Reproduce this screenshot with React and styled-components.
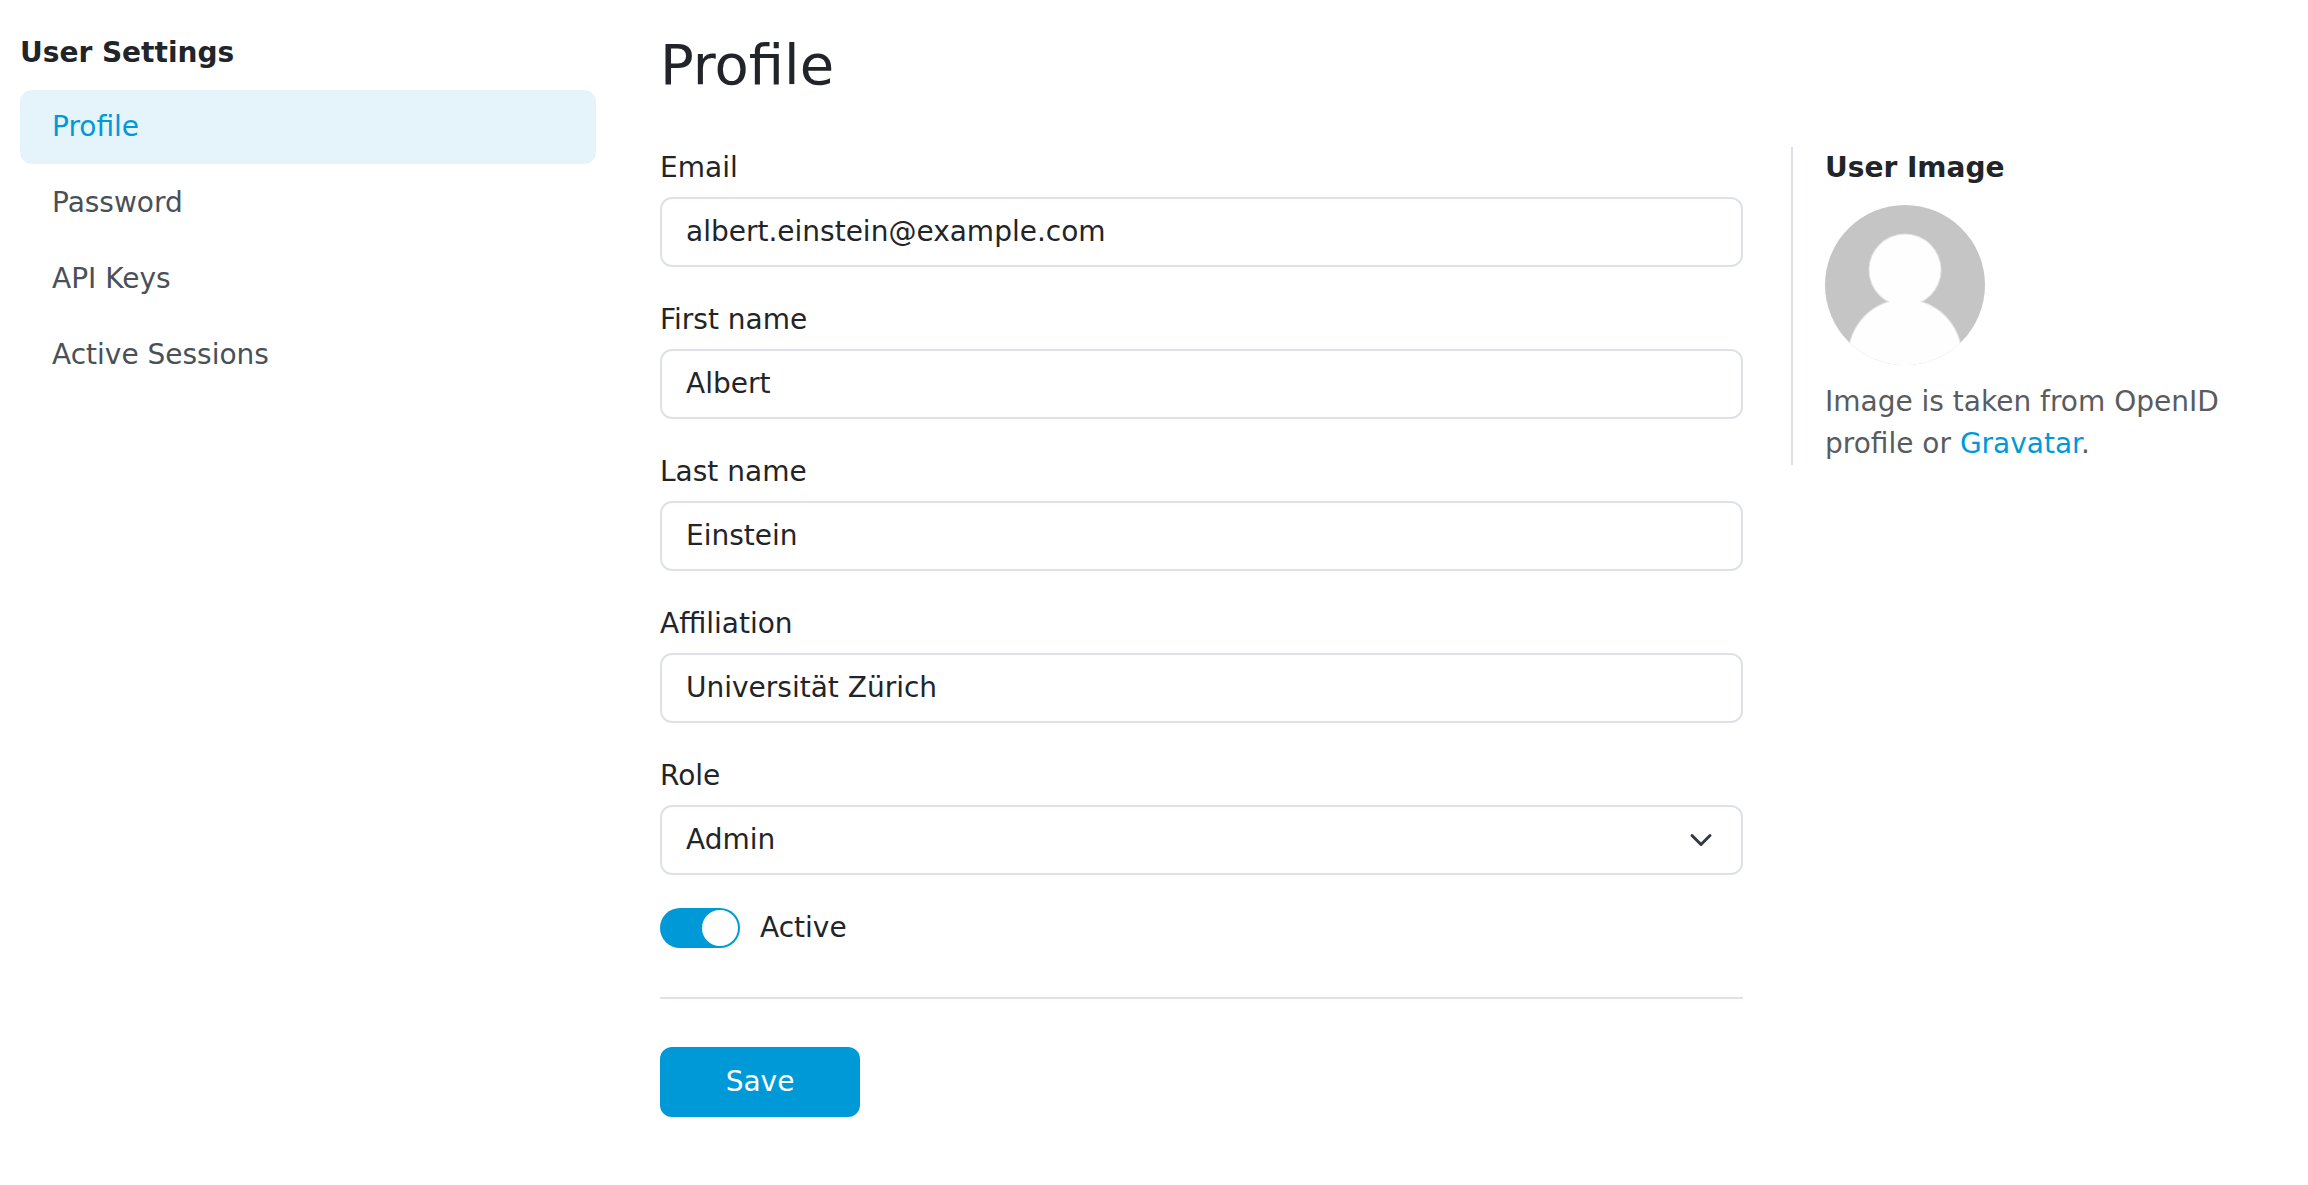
import React from "react";
import styled, { createGlobalStyle } from "styled-components";

const GlobalStyle = createGlobalStyle`
  *, *::before, *::after { box-sizing: border-box; }
  body {
    margin: 0;
    background: #fff;
    color: #212529;
    font-family: "DejaVu Sans", sans-serif;
    font-size: 28px;
    line-height: 42px;
  }
`;

const Page = styled.div`
  display: grid;
  grid-template-columns: 576px 1fr;
  column-gap: 64px;
  padding: 32px 20px;
`;

const SectionTitle = styled.h2`
  margin: 0 0 16px;
  font-size: 28px;
  line-height: 42px;
  font-weight: 700;
`;

const Nav = styled.nav`
  display: flex;
  flex-direction: column;
  gap: 2px;
`;

const NavItem = styled.a`
  padding: 16px 32px;
  border-radius: 12px;
  text-decoration: none;
  color: ${(p) => (p.$active ? "#0099d8" : "#495057")};
  background: ${(p) => (p.$active ? "#e5f4fb" : "transparent")};
`;

const PageTitle = styled.h1`
  margin: 0 0 50px;
  font-size: 56px;
  line-height: 65px;
  font-weight: 400;
`;

const Columns = styled.div`
  display: flex;
  align-items: flex-start;
  gap: 48px;
`;

const Form = styled.form`
  width: 1083px;
  display: flex;
  flex-direction: column;
`;

const Field = styled.div`
  display: flex;
  flex-direction: column;
  gap: 8px;
  margin-bottom: 32px;
`;

const Input = styled.input`
  height: 70px;
  margin: 0;
  padding: 11px 24px 13px;
  border: 2px solid #dee2e6;
  border-radius: 12px;
  outline: 0;
  background: #fff;
  color: inherit;
  font: inherit;
`;

const SelectBox = styled.div`
  display: flex;
  align-items: center;
  justify-content: space-between;
  height: 70px;
  padding: 12px 28px 12px 24px;
  border: 2px solid #dee2e6;
  border-radius: 12px;
`;

const SwitchRow = styled.div`
  display: flex;
  align-items: center;
  gap: 20px;
`;

const Switch = styled.span`
  display: flex;
  justify-content: flex-end;
  width: 80px;
  height: 40px;
  padding: 2px;
  border-radius: 20px;
  background: #0099d8;
`;

const Knob = styled.span`
  width: 36px;
  height: 36px;
  border-radius: 50%;
  background: #fff;
`;

const Divider = styled.hr`
  width: 100%;
  margin: 48px 0;
  border: 0;
  border-top: 2px solid #dee2e6;
`;

const SaveButton = styled.button`
  align-self: flex-start;
  width: 200px;
  height: 70px;
  padding: 0;
  border: 0;
  border-radius: 12px;
  background: #0099d8;
  color: #fff;
  font: inherit;
`;

const ImagePanel = styled.aside`
  flex: 1;
  padding-left: 32px;
  border-left: 2px solid #dee2e6;
`;

const Avatar = styled.svg`
  display: block;
  width: 160px;
  height: 160px;
  margin-bottom: 16px;
  border-radius: 50%;
`;

const Hint = styled.p`
  margin: 0;
  width: 410px;
  color: #595c5f;
`;

const Link = styled.a`
  color: #0099d8;
  text-decoration: none;
`;

const navItems = ["Profile", "Password", "API Keys", "Active Sessions"];

const fields = [
  { id: "email", label: "Email", value: "albert.einstein@example.com" },
  { id: "first", label: "First name", value: "Albert" },
  { id: "last", label: "Last name", value: "Einstein" },
  { id: "affiliation", label: "Affiliation", value: "Universität Zürich" },
];

export default function App() {
  return (
    <>
      <GlobalStyle />
      <Page>
        <div>
          <SectionTitle>User Settings</SectionTitle>
          <Nav>
            {navItems.map((name, i) => (
              <NavItem key={name} href="#" $active={i === 0}>{name}</NavItem>
            ))}
          </Nav>
        </div>
        <main>
          <PageTitle>Profile</PageTitle>
          <Columns>
            <Form>
              {fields.map((f) => (
                <Field key={f.id}>
                  <label htmlFor={f.id}>{f.label}</label>
                  <Input id={f.id} defaultValue={f.value} spellCheck={false} />
                </Field>
              ))}
              <Field>
                <label>Role</label>
                <SelectBox>
                  <span>Admin</span>
                  <svg width="24" height="24" viewBox="0 0 16 16" fill="none" stroke="#343a40" strokeWidth="2" strokeLinecap="round" strokeLinejoin="round">
                    <path d="m2 5 6 6 6-6" />
                  </svg>
                </SelectBox>
              </Field>
              <SwitchRow>
                <Switch><Knob /></Switch>
                <span>Active</span>
              </SwitchRow>
              <Divider />
              <SaveButton type="button">Save</SaveButton>
            </Form>
            <ImagePanel>
              <SectionTitle>User Image</SectionTitle>
              <Avatar viewBox="0 0 160 160">
                <rect width="160" height="160" fill="#c5c5c5" />
                <g fill="#e4e4e4">
                  <circle cx="80" cy="65" r="36.5" />
                  <circle cx="80" cy="151" r="57.3" />
                </g>
                <g fill="#fefefe">
                  <circle cx="80" cy="65" r="35.5" />
                  <circle cx="80" cy="151" r="56.3" />
                </g>
              </Avatar>
              <Hint>Image is taken from OpenID profile or <Link href="#">Gravatar</Link>.</Hint>
            </ImagePanel>
          </Columns>
        </main>
      </Page>
    </>
  );
}
